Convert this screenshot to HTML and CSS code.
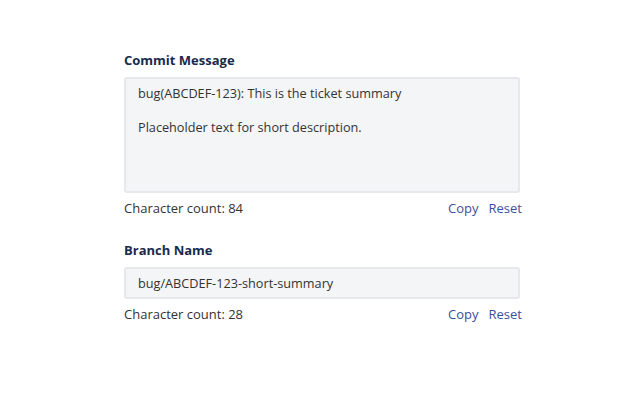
FILE: index.html
```html
<!DOCTYPE html>
<html>
<head>
<meta charset="utf-8">
<link rel="stylesheet" href="styles.css">
</head>
<body>
<main class="page">
  <section class="field">
    <label class="label">Commit Message</label>
    <textarea class="box area" readonly>bug(ABCDEF-123): This is the ticket summary

Placeholder text for short description.</textarea>
    <div class="meta">
      <span class="count">Character count: 84</span>
      <span class="actions"><a class="link">Copy</a><a class="link">Reset</a></span>
    </div>
  </section>
  <section class="field">
    <label class="label">Branch Name</label>
    <input class="box input" readonly value="bug/ABCDEF-123-short-summary">
    <div class="meta">
      <span class="count">Character count: 28</span>
      <span class="actions"><a class="link">Copy</a><a class="link">Reset</a></span>
    </div>
  </section>
</main>
</body>
</html>
```
FILE: styles.css
```css
* { box-sizing: border-box; }
html, body { margin: 0; background: #fff; }
body {
  font-family: "Open Sans", "Noto Sans", sans-serif;
  font-size: 13px;
  color: #333;
}
.page {
  width: 398px;
  margin-left: 124px;
  padding-top: 50px;
  display: flex;
  flex-direction: column;
  gap: 22px;
}
.field { display: flex; flex-direction: column; }
.label {
  font-weight: 700;
  color: #172b4d;
  font-size: 13px;
  line-height: 20px;
  margin-bottom: 7px;
}
.box {
  width: 396px;
  border: 2px solid #e6e8ec;
  border-radius: 3px;
  background: #f4f5f7;
  font-family: inherit;
  font-size: 12.7px;
  color: #333;
  padding: 6px 12px;
  outline: none;
  margin: 0;
}
.area {
  height: 116px;
  resize: none;
  line-height: 17px;
  overflow: hidden;
  display: block;
}
.input { height: 32px; line-height: 20px; padding: 4px 12px; }
.meta {
  display: flex;
  justify-content: space-between;
  line-height: 20px;
  margin-top: 5px;
}
.actions { display: flex; gap: 10px; }
.link { color: #3d4f9f; cursor: pointer; }
```
